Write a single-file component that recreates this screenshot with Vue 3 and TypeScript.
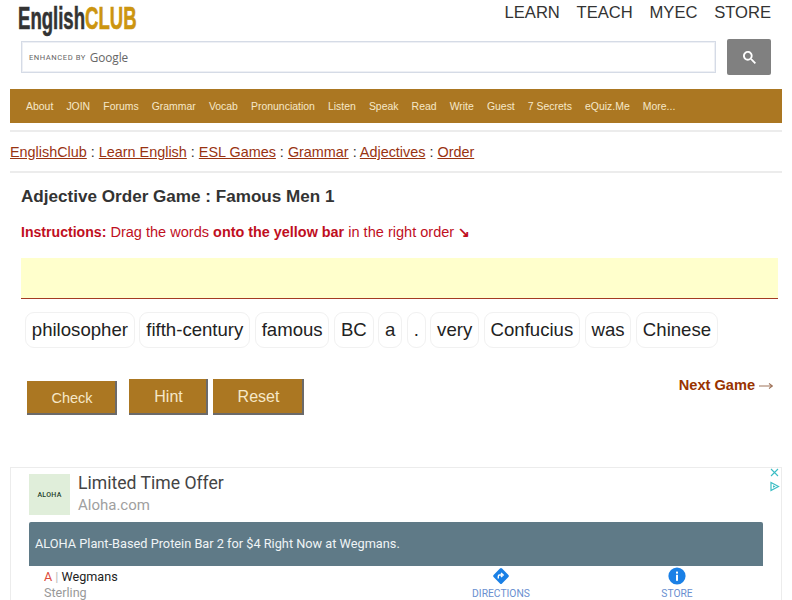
<script setup lang="ts">
const topLinks: string[] = ['LEARN', 'TEACH', 'MYEC', 'STORE']
const navLinks: string[] = ['About', 'JOIN', 'Forums', 'Grammar', 'Vocab', 'Pronunciation', 'Listen', 'Speak', 'Read', 'Write', 'Guest', '7 Secrets', 'eQuiz.Me', 'More...']
const crumbs: string[] = ['EnglishClub', 'Learn English', 'ESL Games', 'Grammar', 'Adjectives', 'Order']
const words: string[] = ['philosopher', 'fifth-century', 'famous', 'BC', 'a', '.', 'very', 'Confucius', 'was', 'Chinese']
</script>

<template>
  <div class="page">
    <header class="top">
      <a class="logo"><span class="logo-a">English</span><span class="logo-b">CLUB</span></a>
      <nav class="toplinks"><a v-for="l in topLinks" :key="l">{{ l }}</a></nav>
    </header>

    <div class="search">
      <div class="search-box">
        <span class="enhanced">ENHANCED BY</span>
        <span class="google">Google</span>
      </div>
      <button class="search-btn" aria-label="Search">
        <svg width="13" height="13" viewBox="0 0 13 13"><path fill="#fff" d="m4.8495 7.8226c0.82666 0 1.5262-0.29146 2.0985-0.87438 0.57232-0.58292 0.86378-1.2877 0.87438-2.1144 0.010599-0.82666-0.28086-1.5262-0.87438-2.0985-0.59352-0.57232-1.293-0.86378-2.0985-0.87438-0.8055-0.010599-1.5103 0.28086-2.1144 0.87438-0.60414 0.59352-0.8956 1.293-0.87438 2.0985 0.021197 0.8055 0.31266 1.5103 0.87438 2.1144 0.56172 0.60414 1.2665 0.8956 2.1144 0.87438zm4.4695 0.2115 3.681 3.6819-1.259 1.284-3.6817-3.7 0.0019784-0.69479-0.090043-0.098846c-0.87973 0.76087-1.92 1.1413-3.1207 1.1413-1.3553 0-2.5025-0.46363-3.4417-1.3909s-1.4088-2.0686-1.4088-3.4239c0-1.3553 0.4696-2.4966 1.4088-3.4239 0.9392-0.92727 2.0864-1.3969 3.4417-1.4088 1.3553-0.011889 2.4906 0.45771 3.406 1.4088 0.9154 0.95107 1.379 2.0924 1.3909 3.4239 0 1.2126-0.38043 2.2588-1.1413 3.1385l0.098834 0.090049z"/></svg>
      </button>
    </div>

    <nav class="mainnav"><a v-for="l in navLinks" :key="l">{{ l }}</a></nav>

    <div class="crumbs">
      <template v-for="(c, i) in crumbs" :key="c">
        <span v-if="i > 0" class="sep"> : </span><a>{{ c }}</a>
      </template>
    </div>

    <main class="game">
      <h1>Adjective Order Game : Famous Men 1</h1>
      <p class="instr"><b class="lead">Instructions:</b> Drag the words <b>onto the yellow bar</b> in the right order <b>↘</b></p>
      <div class="drop"></div>
      <div class="words"><span v-for="(w, i) in words" :key="i" class="chip">{{ w }}</span></div>
      <div class="actions">
        <button class="btn check">Check</button>
        <button class="btn hint">Hint</button>
        <button class="btn reset">Reset</button>
        <a class="next">Next Game<svg class="arrow" width="14" height="8" viewBox="0 0 14 8"><path d="M0 4h12.5M10 1.5L13.500 4 10 6.500" stroke="#a0745a" stroke-width="1.1" fill="none"/></svg></a>
      </div>
    </main>

    <aside class="ad">
      <div class="adchoices">
        <svg width="11" height="11" viewBox="0 0 11 11"><path d="M2 2l7 7M9 2l-7 7" stroke="#3bbdc4" stroke-width="1.1" fill="none"/></svg>
        <svg width="11" height="11" viewBox="0 0 11 11"><path d="M2 1.5v8l7.5-4z" stroke="#3bbdc4" stroke-width="1.2" fill="none"/><path d="M4 4.2v2.6l2.6-1.3z" fill="#3bbdc4"/></svg>
      </div>
      <div class="ad-head">
        <div class="ad-logo">ALOHA</div>
        <div class="ad-titles">
          <div class="ad-title">Limited Time Offer</div>
          <div class="ad-url">Aloha.com</div>
        </div>
      </div>
      <div class="ad-bar">ALOHA Plant-Based Protein Bar 2 for $4 Right Now at Wegmans.</div>
      <div class="ad-row">
        <div class="ad-store">
          <div class="ad-name"><span class="red">A</span><span class="pipe"> | </span>Wegmans</div>
          <div class="ad-city">Sterling</div>
        </div>
        <div class="ad-action dir">
          <svg width="18" height="18" viewBox="0 0 18 18"><rect x="3" y="3" width="12" height="12" rx="1.5" transform="rotate(45 9 9)" fill="#1a80e6"/><path d="M6.3 11.6V9.2c0-.7.5-1.2 1.2-1.2h2.6M9 5.9l2.2 2.1L9 10.1" stroke="#fff" stroke-width="1.4" fill="none"/></svg>
          <span>DIRECTIONS</span>
        </div>
        <div class="ad-action store">
          <svg width="18" height="18" viewBox="0 0 18 18"><circle cx="9" cy="9" r="8.6" fill="#1a80e6"/><rect x="8" y="7.8" width="2" height="6" fill="#fff"/><rect x="8" y="4.6" width="2" height="2" fill="#fff"/></svg>
          <span>STORE</span>
        </div>
      </div>
    </aside>
  </div>
</template>

<style>
html, body { margin: 0; overflow: hidden; background: #fff; }
</style>

<style scoped>
.page {
  width: 792px;
  height: 600px;
  overflow: hidden;
  box-sizing: border-box;
  padding: 0 10px;
  font-family: "Liberation Sans", Arial, sans-serif;
  color: #333;
}
.top {
  display: flex;
  justify-content: space-between;
  height: 41px;
  padding: 0 11px 0 8px;
}
.logo {
  display: block;
  width: 206px;
  white-space: nowrap;
  transform: scaleX(0.58);
  transform-origin: 0 0;
  font: bold 32px "Liberation Sans", sans-serif;
  -webkit-text-stroke: 0.6px;
}
.logo-a { color: #333; }
.logo-b { color: #cc9510; }
.toplinks { display: flex; gap: 16.7px; padding-top: 3px; font-size: 16.6px; line-height: 19px; color: #333; }
.search { display: flex; justify-content: space-between; align-items: center; padding: 0 11px; height: 36px; margin-top: -2px; }
.search-box {
  box-sizing: border-box;
  width: 695px;
  height: 32px;
  border: 1px solid #d5dbe6;
  box-shadow: inset 0 0 0 1px #eef0f5;
  background: #fff;
  display: flex;
  align-items: center;
  padding-left: 7px;
  gap: 4px;
}
.enhanced { font-size: 7.6px; letter-spacing: 0.55px; color: #666; font-family: "Roboto", sans-serif; }
.google { font-size: 11.8px; color: #666; font-family: "Open Sans", sans-serif; letter-spacing: -0.1px; }
.search-btn {
  width: 44px;
  height: 36px;
  background: #808080;
  border: 0;
  border-radius: 2px;
  padding: 0;
  display: flex;
  align-items: center;
  justify-content: center;
}
.mainnav {
  margin-top: 14px;
  height: 34px;
  box-sizing: border-box;
  background: #ab7722;
  display: flex;
  align-items: center;
  gap: 13.1px;
  padding-left: 16px;
  font-size: 10.45px;
  color: #f6e8c8;
}
.crumbs {
  margin-top: 7px;
  border-top: 2px solid #ececec;
  border-bottom: 2px solid #ececec;
  height: 43px;
  box-sizing: border-box;
  display: block;
  white-space: pre;
  font-size: 14.4px;
  line-height: 41px;
  color: #333;
}
.crumbs a { color: #993311; text-decoration: underline; }
.game { padding: 0 4px 0 11px; }
h1 { margin: 14px 0 0; font-size: 17.1px; line-height: 20px; font-weight: bold; color: #333; }
.instr { margin: 15px 0 0; font-size: 14.55px; line-height: 20px; color: #c00f1e; }
.instr b { font-size: 14.4px; }
.instr .lead { font-size: 14.1px; }
.drop { margin-top: 16px; height: 41px; box-sizing: border-box; background: #ffffcc; border-bottom: 1px solid #a33b22; }
.words { display: flex; gap: 4.7px; margin: 13px 0 0 4px; }
.chip {
  box-sizing: border-box;
  height: 36px;
  padding: 0 5.8px;
  border: 1px solid #f1f1f1;
  border-radius: 9px;
  font-size: 18.6px;
  line-height: 34px;
  color: #222;
  background: #fff;
}
.actions { display: flex; align-items: flex-start; margin: 31px 0 0 6px; position: relative; }
.btn {
  box-sizing: border-box;
  height: 36px;
  border: 0;
  padding: 0;
  background: #ab7722;
  box-shadow: inset -2px -2px 0 #6b6a6a;
  font: 16px "Liberation Sans", sans-serif;
  color: #f6e8c8;
}
.check { width: 90px; height: 34px; margin-top: 2px; font-size: 14.5px; }
.hint { width: 79px; margin-left: 12px; }
.reset { width: 91px; margin-left: 5px; }
.next { display: flex; align-items: center; margin-left: auto; margin-right: 5px; margin-top: -4px; font-size: 14.6px; line-height: 20px; font-weight: bold; color: #993300; }
.arrow { margin: 2px 0 0 4px; display: block; }
.ad {
  margin-top: 52px;
  height: 160px;
  box-sizing: border-box;
  border: 1px solid #ececec;
  padding: 6px 18px 0;
  position: relative;
  font-family: "Roboto", sans-serif;
}
.adchoices { position: absolute; top: -1px; right: 1px; display: flex; flex-direction: column; gap: 3px; }
.adchoices svg { display: block; }
.ad-head { display: flex; gap: 8px; height: 41px; }
.ad-logo {
  width: 41px;
  height: 41px;
  background: #e0eeda;
  color: #23412c;
  font-size: 7px;
  font-weight: 500;
  letter-spacing: 0.3px;
  display: flex;
  align-items: center;
  justify-content: center;
}
.ad-titles { margin-top: -1px; }
.ad-title { font-size: 17.6px; line-height: 20px; color: #444; font-weight: 400; }
.ad-url { font-size: 15px; line-height: 20px; margin-top: 2px; color: #a0a0a0; }
.ad-bar {
  margin-top: 7px;
  height: 44px;
  box-sizing: border-box;
  background: #5f7a87;
  border-radius: 2px 2px 0 0;
  color: #f0f4f6;
  font-size: 12.75px;
  line-height: 44px;
  padding-left: 6px;
}
.ad-row { display: flex; }
.ad-store { flex: none; width: 381px; padding: 3px 0 0 15px; box-sizing: border-box; }
.ad-name { font-size: 12.6px; line-height: 15px; color: #222; }
.red { color: #dd4b39; }
.pipe { color: #bbb; }
.ad-city { font-size: 12.6px; line-height: 17px; color: #999; }
.ad-action { flex: none; display: flex; flex-direction: column; align-items: center; font-size: 10.3px; color: #6a8fd0; padding-top: 1px; }
.ad-action span { line-height: 12px; margin-top: 3px; }
.dir { width: 182px; }
.store { width: 170px; }
</style>
